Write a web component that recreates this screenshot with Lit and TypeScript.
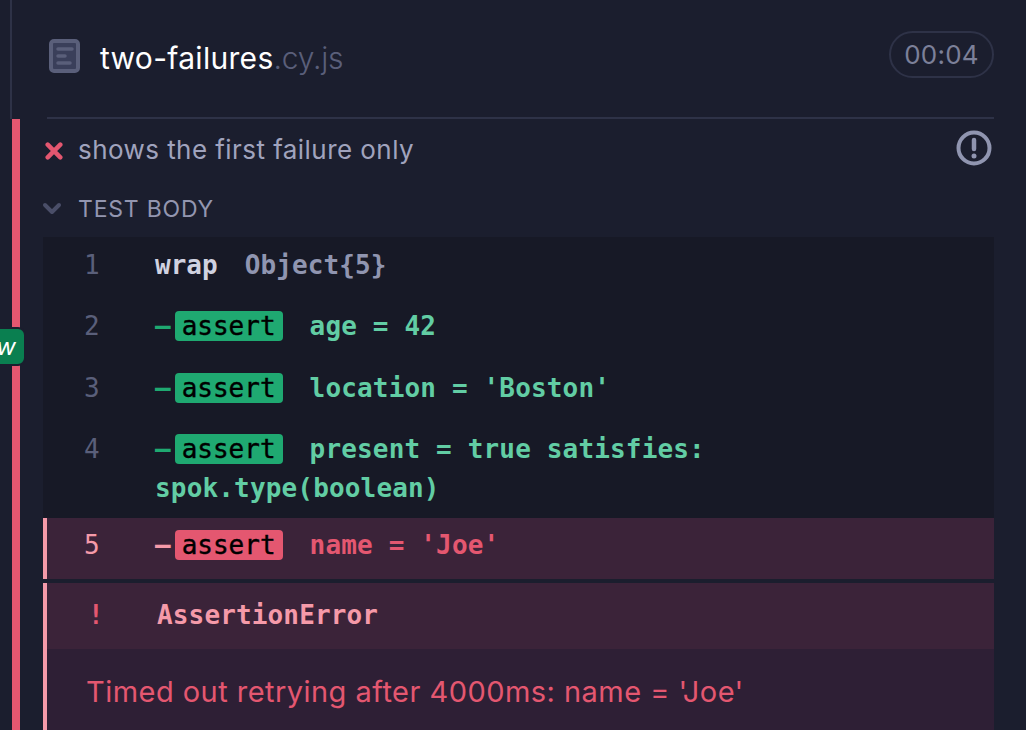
import { LitElement, html, css } from "lit";
import { customElement } from "lit/decorators.js";

const cmd = (n: string, text: string) => html`
  <div class="row ok">
    <span class="num">${n}</span>
    <div class="body"><span class="dash">–</span><span class="badge">assert</span><span class="msg">${text}</span></div>
  </div>`;

@customElement("app-root")
export class AppRoot extends LitElement {
  static styles = css`
    :host { display: block; width: 1026px; height: 730px; overflow: hidden; background: #1b1e2e; position: relative; font-family: Inter, "Noto Sans", sans-serif; }
    .head { margin-left: 10px; height: 119px; border-left: 2px solid #2e3247; padding: 0 32px 0 35px; box-sizing: border-box; }
    .head-in { height: 119px; box-sizing: border-box; border-bottom: 2px solid #2e3247; display: flex; align-items: center; padding: 0 0 2px 2px; }
    .doc { width: 31px; height: 34px; display: block; flex: none; margin-bottom: 4px; }
    .title { margin-left: 20px; font-size: 30px; line-height: 36px; color: #fff; letter-spacing: 0.3px; }
    .ext { color: #5a5f7a; font-weight: 300; letter-spacing: -0.2px; }
    .timer { margin-left: auto; margin-bottom: 6px; height: 47px; width: 105px; box-sizing: border-box; border: 2px solid #2e3247; border-radius: 24px; display: flex; align-items: center; justify-content: center; color: #7c8099; font-size: 26px; letter-spacing: 0.2px; }
    .main { margin-left: 12px; border-left: 8px solid #e45770; padding: 0 32px 0 23px; height: 611px; }
    .test { height: 62px; display: flex; align-items: center; color: #a0a3bd; font-size: 26px; letter-spacing: 0.44px; line-height: 60px; }
    .x { width: 18px; height: 18px; margin: 2px 15px 0 2px; flex: none; }
    .alert { margin-left: auto; width: 36px; height: 36px; margin-right: 2px; margin-top: -4px; }
    .section { height: 56px; display: flex; align-items: center; color: #9396b0; font-size: 23px; letter-spacing: 0.8px; }
    .chev { width: 20px; height: 14px; margin-right: 16px; flex: none; margin-left: -1px; }
    .log { background: #171926; font-family: "DejaVu Sans Mono", monospace; font-size: 26px; line-height: 39px; }
    .row { display: flex; padding: 11px 0 11.4px; }
    .row:first-child { padding-top: 9px; }
    .row:nth-child(4) { padding-bottom: 10px; }
    .num { width: 112px; flex: none; box-sizing: border-box; padding-left: 41px; color: #5a5f7a; }
    .body { flex: 1; padding-right: 24px; }
    .dash { color: #1fa971; font-weight: 700; margin-right: 4px; }
    .badge { background: #1fa971; color: #000; border-radius: 4px; padding: 0 7px; -webkit-text-stroke: 0.4px #000; }
    .msg { color: #62cda4; font-weight: 700; margin-left: 27px; letter-spacing: 0.16px; }
    .wrap { color: #d0d2e0; font-weight: 700; }
    .obj { color: #9095b0; font-weight: 700; margin-left: 27px; letter-spacing: 0.1px; }
    .fail { background: #3b2339; border-left: 4px solid #f59aa9; padding: 8px 0 14px; }
    .fail .num { color: #f59aa9; width: 108px; padding-left: 37px; }
    .fail .dash { color: #f59aa9; }
    .fail .badge { background: #e45770; }
    .fail .msg { color: #e45770; }
    .err { margin-top: 4px; border-left: 4px solid #f59aa9; background: #2e1f35; height: 200px; }
    .err-head { height: 66px; box-sizing: border-box; padding-bottom: 2px; background: #3b2339; display: flex; align-items: center; font-family: "DejaVu Sans Mono", monospace; font-size: 26px; font-weight: 700; color: #f59aa9; letter-spacing: 0.14px; }
    .bang { color: #e45770; width: 110px; box-sizing: border-box; padding-left: 41px; flex: none; }
    .err-msg { color: #e45770; font-size: 29px; letter-spacing: 0.46px; line-height: 36px; padding: 25px 0 0 39px; }
    .tab { position: absolute; left: -8px; top: 327px; width: 34px; height: 39px; box-sizing: border-box; border: 2px solid #1b1e2e; border-radius: 8px; background: #0a7f50; color: #fff; font-size: 24px; font-style: italic; display: flex; align-items: center; justify-content: center; padding-right: 6px; }
  `;
  render() {
    return html`
      <div class="head"><div class="head-in">
        <svg class="doc" viewBox="0 0 31 34"><rect x="2" y="2" width="27" height="30" rx="3" fill="#3a3f5a" stroke="#5a5f7a" stroke-width="4"/><path d="M9 10H23M9 17H16M9 24H21" stroke="#5a5f7a" stroke-width="3.5" stroke-linecap="round" fill="none"/></svg>
        <span class="title">two-failures<span class="ext">.cy.js</span></span>
        <span class="timer">00:04</span>
      </div></div>
      <div class="main">
        <div class="test">
          <svg class="x" viewBox="0 0 20 20"><path d="M3 3L17 17M17 3L3 17" stroke="#e45770" stroke-width="5" stroke-linecap="round"/></svg>
          <span>shows the first failure only</span>
          <svg class="alert" viewBox="0 0 36 36"><circle cx="18" cy="18" r="15.5" fill="none" stroke="#9095b0" stroke-width="4"/><path d="M18 10v9" stroke="#9095b0" stroke-width="4.5" stroke-linecap="round"/><circle cx="18" cy="26" r="2.5" fill="#9095b0"/></svg>
        </div>
        <div class="section">
          <svg class="chev" viewBox="0 0 20 14"><path d="M3 3l7 7 7-7" fill="none" stroke="#4a4e68" stroke-width="4" stroke-linecap="round" stroke-linejoin="round"/></svg>
          <span>TEST BODY</span>
        </div>
        <div class="log">
          <div class="row"><span class="num">1</span><div class="body"><span class="wrap">wrap</span><span class="obj">Object{5}</span></div></div>
          ${cmd("2", "age = 42")}
          ${cmd("3", "location = 'Boston'")}
          ${cmd("4", "present = true satisfies: spok.type(boolean)")}
          <div class="row fail"><span class="num">5</span><div class="body"><span class="dash">–</span><span class="badge">assert</span><span class="msg">name = 'Joe'</span></div></div>
        </div>
        <div class="err">
          <div class="err-head"><span class="bang">!</span><span>AssertionError</span></div>
          <div class="err-msg">Timed out retrying after 4000ms: name = 'Joe'</div>
        </div>
      </div>
      <div class="tab">w</div>
    `;
  }
}
